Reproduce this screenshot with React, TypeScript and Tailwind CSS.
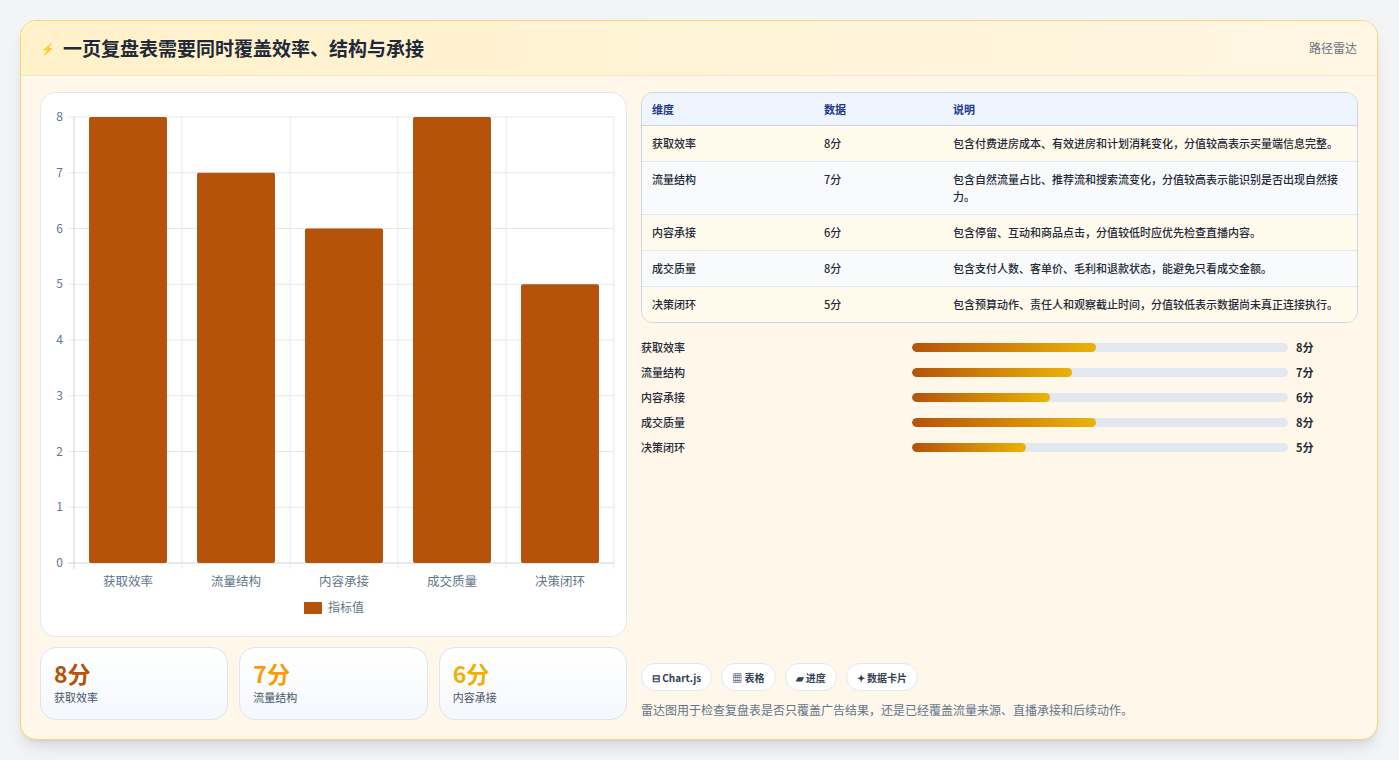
import React from "react";

const F = { fontFamily: '"Noto Sans CJK SC", "Noto Sans", sans-serif' };
const rows = [
  ["获取效率", 8, "包含付费进房成本、有效进房和计划消耗变化，分值较高表示买量端信息完整。", "bg-[#fffaeb]"],
  ["流量结构", 7, "包含自然流量占比、推荐流和搜索流变化，分值较高表示能识别是否出现自然接力。", "bg-[#f8fafc]"],
  ["内容承接", 6, "包含停留、互动和商品点击，分值较低时应优先检查直播内容。", "bg-[#fffaeb]"],
  ["成交质量", 8, "包含支付人数、客单价、毛利和退款状态，能避免只看成交金额。", "bg-[#f8fafc]"],
  ["决策闭环", 5, "包含预算动作、责任人和观察截止时间，分值较低表示数据尚未真正连接执行。", "bg-[#fffaeb]"],
] as const;
const prog = [184, 160, 138, 184, 114];

function Chart() {
  const x0 = 33, x1 = 573, top = 24, bot = 470;
  const step = (bot - top) / 8;
  const cw = (x1 - x0) / 5;
  return (
    <svg width="586" height="544" className="block">
      {Array.from({ length: 9 }).map((_, i) => (
        <g key={i}>
          <line x1={x0 - 6} x2={x1} y1={bot - i * step} y2={bot - i * step} stroke={i === 0 ? "#cbd5e1" : "#e5e7eb"} />
          <text x={22} y={bot - i * step + 4} fontSize="12" fill="#64748b" textAnchor="end" style={F}>{i}</text>
        </g>
      ))}
      {Array.from({ length: 6 }).map((_, i) => (
        <line key={i} x1={x0 + i * cw} x2={x0 + i * cw} y1={top} y2={bot + 6} stroke={i === 0 ? "#cbd5e1" : "#e5e7eb"} />
      ))}
      {rows.map((r, i) => (
        <g key={i}>
          <rect x={x0 + i * cw + 15} y={bot - (r[1] as number) * step} width={78} height={(r[1] as number) * step} rx="2" fill="#b45309" />
          <text x={x0 + i * cw + cw / 2} y={bot + 23} fontSize="12.5" fill="#64748b" textAnchor="middle" style={F}>{r[0]}</text>
        </g>
      ))}
      <rect x={263} y={509} width={18} height={12} fill="#b45309" />
      <text x={287} y={519} fontSize="12" fill="#64748b" style={F}>指标值</text>
    </svg>
  );
}

export default function App() {
  return (
    <div style={F} className="w-[1399px] h-[760px] bg-[#f3f4f6] pt-5 pl-5">
      <div className="w-[1358px] h-[720px] rounded-2xl border border-[#f5d77a] bg-[#fff8ea] overflow-hidden shadow-lg flex flex-col">
        <div className="h-[55px] flex items-center justify-between px-5 bg-gradient-to-r from-[#fff1c9] to-[#fff6e3] border-b border-[#f6e7c4]">
          <div className="flex items-center gap-2">
            <span className="text-[11px] text-blue-600">⚡</span>
            <span className="text-[19px] font-bold text-[#1f2937]">一页复盘表需要同时覆盖效率、结构与承接</span>
          </div>
          <span className="text-[12px] text-[#6b7280]">路径雷达</span>
        </div>
        <div className="flex gap-[14px] px-[19px] pt-4">
          <div className="w-[587px] flex flex-col gap-[10px]">
            <div className="h-[545px] rounded-2xl bg-white border border-[#e5e7eb]"><Chart /></div>
            <div className="grid grid-cols-3 gap-[11px]">
              {[["8分", "text-[#b45309]", "获取效率"], ["7分", "text-[#f59e0b]", "流量结构"], ["6分", "text-[#eab308]", "内容承接"]].map(([v, c, l]) => (
                <div key={l} className="h-[73px] rounded-2xl border border-[#dde5f0] bg-gradient-to-b from-white to-[#f5f8fc] px-[13px] pt-[10px]">
                  <div className={`text-[23px] font-bold leading-[30px] ${c}`}>{v}</div>
                  <div className="text-[11px] text-[#475569] mt-[1px]">{l}</div>
                </div>
              ))}
            </div>
          </div>
          <div className="w-[719px] flex flex-col">
            <div className="rounded-xl border border-[#cbd5e1] overflow-hidden">
              <div className="h-[33px] flex items-center bg-[#eef5ff] border-b border-[#cbd5e1] text-[11px] font-bold text-[#1e3a8a]">
                <div className="w-[172px] pl-[10px]">维度</div>
                <div className="w-[129px] pl-[10px]">数据</div>
                <div className="flex-1 pl-[10px]">说明</div>
              </div>
              {rows.map((r, i) => (
                <div key={i} className={`flex items-start py-[9px] text-[11px] leading-[17px] text-[#1f2937] font-medium ${r[3]} ${i < 4 ? "border-b border-[#e2e8f0]" : ""}`}>
                  <div className="w-[172px] pl-[10px]">{r[0]}</div>
                  <div className="w-[129px] pl-[10px]">{r[1]}分</div>
                  <div className="flex-1 pl-[10px] pr-[10px]">{r[2]}</div>
                </div>
              ))}
            </div>
            <div className="mt-[12px] flex flex-col">
              {rows.map((r, i) => (
                <div key={i} className="h-[25px] flex items-center text-[11px] font-medium text-[#1f2937]">
                  <div className="w-[271px]">{r[0]}</div>
                  <div className="w-[376px] h-[9px] rounded-full bg-[#e2e8f0] overflow-hidden">
                    <div className="h-full rounded-full bg-gradient-to-r from-[#b45309] to-[#eab308]" style={{ width: prog[i] }} />
                  </div>
                  <div className="ml-[8px] font-bold">{r[1]}分</div>
                </div>
              ))}
            </div>
            <div className="mt-auto flex gap-[9px]">
              {["⊟ Chart.js", "▦ 表格", "▰ 进度", "✦ 数据卡片"].map((t) => (
                <span key={t} className="h-[28px] px-[10px] flex items-center rounded-full border border-[#e2e8f0] bg-white text-[10px] font-bold text-[#334155]">{t}</span>
              ))}
            </div>
            <div className="mt-[10px] mb-[1px] text-[12px] text-[#64748b]">雷达图用于检查复盘表是否只覆盖广告结果，还是已经覆盖流量来源、直播承接和后续动作。</div>
          </div>
        </div>
      </div>
    </div>
  );
}
